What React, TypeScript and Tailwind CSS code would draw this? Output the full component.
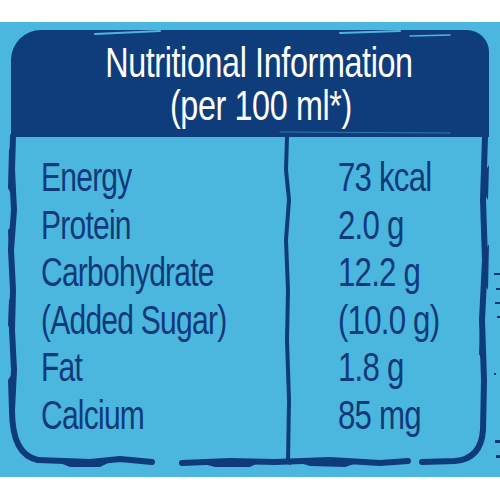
import React from "react";

const rows: [string, string][] = [
  ["Energy", "73 kcal"],
  ["Protein", "2.0 g"],
  ["Carbohydrate", "12.2 g"],
  ["(Added Sugar)", "(10.0 g)"],
  ["Fat", "1.8 g"],
  ["Calcium", "85 mg"],
];

const INK = "#0f3b7a";

function Frame() {
  return (
    <svg
      className="absolute left-0 top-0 pointer-events-none"
      width="500"
      height="500"
      viewBox="0 0 500 500"
      fill="none"
    >
      <g stroke={INK} strokeLinecap="round" strokeLinejoin="round">
        {/* left edge */}
        <path d="M13 136 L12 170 L14 210 L11 250 L13 290 L12 330 L14 370 L12 410 Q12 455 38 460" strokeWidth="6" />
        {/* bottom edge with gaps */}
        <path d="M38 460 L90 462 L120 459 L152 462" strokeWidth="6" />
        <path d="M182 463 L230 461 L275 462 L330 460 L380 463 L408 461" strokeWidth="6" />
        <path d="M422 462 L455 461 Q481 459 483 430 L484 380 L482 320 L485 260 L483 200 L485 137" strokeWidth="6" />
        {/* divider */}
        <path d="M287 137 L286 170 L289 200 L286 240 L288 290 L287 340 L289 400 L288 462" strokeWidth="4" />
      </g>
      <g fill={INK}>
        {/* roughness splotches */}
        <path d="M9 150 L12 146 L12 196 L8 188 Z" />
        <path d="M8 230 L12 226 L12 262 L9 256 Z" />
        <path d="M9 300 L12 296 L12 335 L8 325 Z" />
        <path d="M8 380 L12 374 L12 420 L9 410 Z" />
        <path d="M60 463 L110 462 L100 467 L70 467 Z" />
        <path d="M200 463 L260 462 L250 467 L215 467 Z" />
        <path d="M300 463 L360 462 L345 467 L310 466 Z" />
        <path d="M486 170 L489 165 L488 200 L485 195 Z" />
        <path d="M486 250 L489 244 L488 290 L485 284 Z" />
        <path d="M480 330 L483 326 L482 360 L479 354 Z" />
        <path d="M278 460 L300 459 L290 465 Z" />
        {/* fragments of neighbouring panel at right edge */}
        <rect x="494" y="273" width="6" height="2" />
        <rect x="496" y="288" width="4" height="2" />
        <rect x="495" y="302" width="5" height="2" />
        <rect x="497" y="316" width="3" height="2" />
        <rect x="494" y="373" width="2" height="2" />
        <rect x="495" y="440" width="5" height="3" />
        <rect x="496" y="455" width="4" height="3" />
      </g>
      <g stroke="#4bb7df" strokeLinecap="round">
        {/* light streaks along band top edge */}
        <path d="M95 34 L160 31" strokeWidth="2" />
        <path d="M340 33 L400 31" strokeWidth="2" />
        <path d="M410 36 L450 35" strokeWidth="1.5" />
        <path d="M280 132 L450 133" strokeWidth="1" strokeOpacity="0.5" />
      </g>
    </svg>
  );
}

export default function App() {
  return (
    <div
      className="relative w-[500px] h-[500px] bg-white overflow-hidden"
      style={{ fontFamily: '"Liberation Sans", Arial, sans-serif' }}
    >
      <div className="mt-[22px] h-[455px] bg-[#4bb7df] pt-[8px] pl-[11px]">
        <div className="w-[478px]">
          <div className="h-[107px] bg-[#0f3d7c] rounded-tl-[30px] rounded-tr-[22px] pt-[11px] flex flex-col items-center text-white text-[42px] leading-[43px] tracking-[-0.5px]">
            <div className="pl-[24px] scale-x-[0.77] whitespace-nowrap">Nutritional Information</div>
            <div className="pl-[28px] scale-x-[0.77] whitespace-nowrap">(per 100 ml*)</div>
          </div>
          <div className="h-[328px] flex text-[#113a78] text-[40px] leading-[47.6px] tracking-[-1px]">
            <div className="w-[277px] pl-[30px] pt-[17px]">
              <div className="scale-x-[0.75] origin-left whitespace-nowrap">
                {rows.map(([k]) => (
                  <div key={k}>{k}</div>
                ))}
              </div>
            </div>
            <div className="flex-1 pl-[50px] pt-[17px]">
              <div className="scale-x-[0.78] origin-left whitespace-nowrap">
                {rows.map(([k, v]) => (
                  <div key={k}>{v}</div>
                ))}
              </div>
            </div>
          </div>
        </div>
      </div>
      <Frame />
    </div>
  );
}
